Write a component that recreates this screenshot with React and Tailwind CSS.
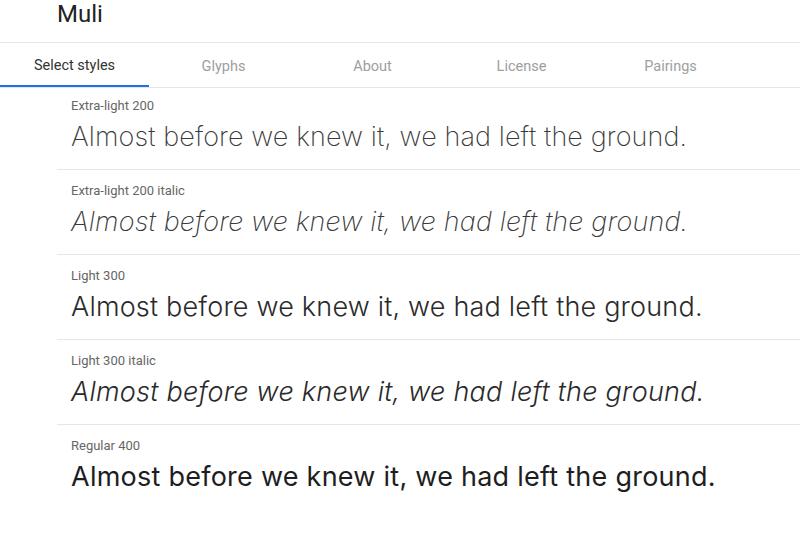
const tabs = ['Select styles', 'Glyphs', 'About', 'License', 'Pairings'];

const styles = [
  { label: 'Extra-light 200', cls: 'font-extralight not-italic text-[#3a3a3a] tracking-[0.1px]' },
  { label: 'Extra-light 200 italic', cls: 'font-extralight italic text-[#3a3a3a] tracking-[0.15px]' },
  { label: 'Light 300', cls: 'font-light not-italic text-[#2a2a2a] tracking-[0.2px]' },
  { label: 'Light 300 italic', cls: 'font-light italic text-[#2a2a2a] tracking-[0.25px]' },
  { label: 'Regular 400', cls: 'font-normal not-italic text-[#1e1e1e] tracking-[0.25px]' },
];

export default function App() {
  return (
    <div className="w-[800px] h-[538px] bg-white overflow-hidden font-['Roboto',sans-serif]">
      {/* header */}
      <div className="h-[42px] pl-[57px] flex items-center">
        <h1 className="text-[24px] leading-none text-[#222] -mt-[14px]">Muli</h1>
      </div>

      {/* tabs */}
      <div className="flex border-y border-[#e6e6e6] h-[46px]">
        {tabs.map((t, i) => (
          <div
            key={t}
            className={`w-[149px] flex items-center justify-center pt-[4px] text-[14.5px] ${
              i === 0 ? 'text-[#333] border-b-2 border-[#1a73e8]' : 'text-[#9e9e9e]'
            }`}
          >
            {t}
          </div>
        ))}
      </div>

      {/* styles list */}
      <div className="ml-[57px]">
        {styles.map((s, i) => (
          <div
            key={s.label}
            className={`pl-[14px] ${i === 0 ? 'pt-[10px] pb-[16px]' : 'pt-[13px] pb-[16px]'} ${
              i < styles.length - 1 ? 'border-b border-[#e6e6e6]' : ''
            }`}
          >
            <p className="text-[13px] leading-[16px] text-[#666]">{s.label}</p>
            <p className={`mt-[7px] text-[27px] leading-[32px] font-['Inter',sans-serif] ${s.cls}`}>
              Almost before we knew it, we had left the ground.
            </p>
          </div>
        ))}
      </div>
    </div>
  );
}
